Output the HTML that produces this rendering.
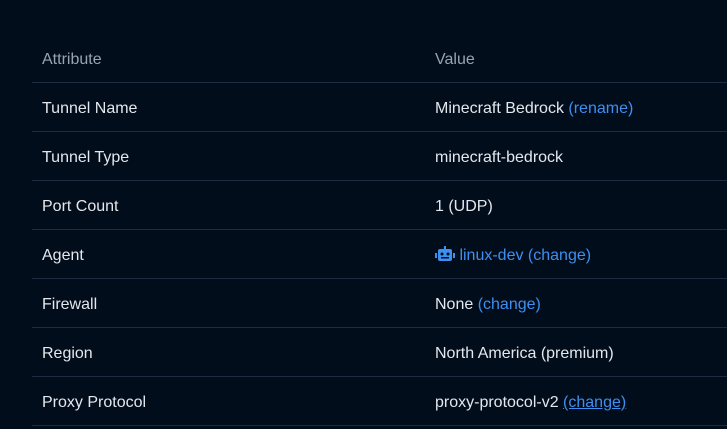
<!DOCTYPE html>
<html><head><style>
body{margin:0;background:#020d1c;width:727px;height:429px;overflow:hidden;font-family:"Liberation Sans",sans-serif;font-size:16px;color:#e4e7eb}
.row{position:absolute;left:32px;width:700px;height:49px;border-bottom:1px solid #1c2d42}
.a{position:absolute;left:10px;top:2px;line-height:49px}
.v{position:absolute;left:403px;top:2px;line-height:49px;white-space:nowrap}
.h{color:#9aa4b0}
.l{color:#3d8ff0}
</style></head><body>
<div class="row h" style="top:33px"><span class="a">Attribute</span><span class="v">Value</span></div>
<div class="row" style="top:82px"><span class="a">Tunnel Name</span><span class="v">Minecraft Bedrock <span class="l">(rename)</span></span></div>
<div class="row" style="top:131px"><span class="a">Tunnel Type</span><span class="v">minecraft-bedrock</span></div>
<div class="row" style="top:180px"><span class="a">Port Count</span><span class="v">1 (UDP)</span></div>
<div class="row" style="top:229px"><span class="a">Agent</span><span class="v l"><svg width="20" height="16" viewBox="0 0 20 16" style="vertical-align:-2px"><rect x="9" y="0" width="2" height="3" fill="#3d8ff0"/><rect x="3" y="3" width="14" height="12" rx="2" fill="#3d8ff0"/><rect x="0" y="7" width="2" height="5" fill="#3d8ff0"/><rect x="18" y="7" width="2" height="5" fill="#3d8ff0"/><circle cx="7" cy="8" r="1.5" fill="#020d1c"/><circle cx="13" cy="8" r="1.5" fill="#020d1c"/><rect x="6" y="11" width="8" height="1.5" fill="#020d1c"/></svg> linux-dev (change)</span></div>
<div class="row" style="top:278px"><span class="a">Firewall</span><span class="v">None <span class="l">(change)</span></span></div>
<div class="row" style="top:327px"><span class="a">Region</span><span class="v">North America (premium)</span></div>
<div class="row" style="top:376px"><span class="a">Proxy Protocol</span><span class="v">proxy-protocol-v2 <span class="l" style="text-decoration:underline">(change)</span></span></div>
</body></html>
